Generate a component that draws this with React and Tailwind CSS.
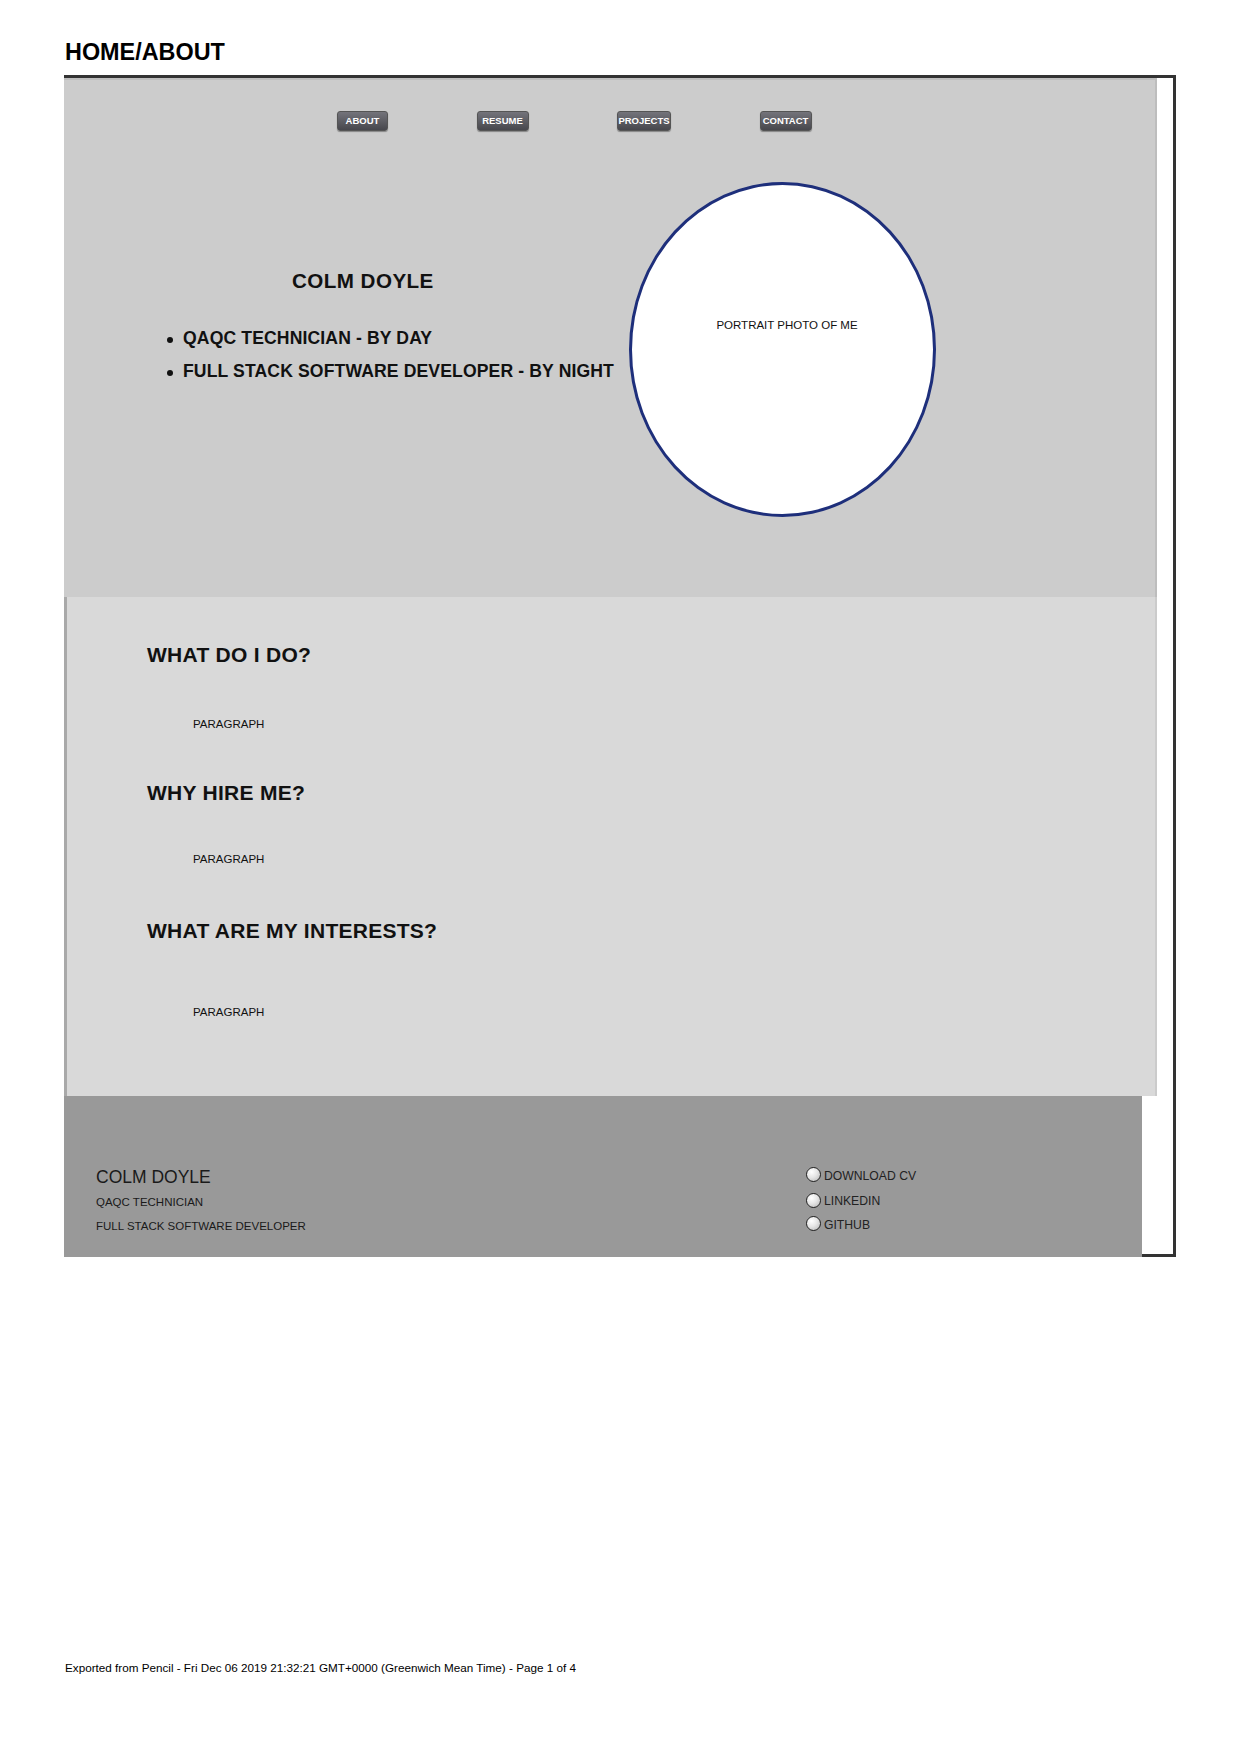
export default function App() {
  const navs = [
    { label: "ABOUT", w: "w-[51px]" },
    { label: "RESUME", w: "w-[52px]" },
    { label: "PROJECTS", w: "w-[54px]" },
    { label: "CONTACT", w: "w-[52px]" },
  ];
  const sections = [
    { title: "WHAT DO I DO?", hmt: "mt-[46px]", pmt: "mt-[49.5px]" },
    { title: "WHY HIRE ME?", hmt: "mt-[50.5px]", pmt: "mt-[46.5px]" },
    { title: "WHAT ARE MY INTERESTS?", hmt: "mt-[53.5px]", pmt: "mt-[61.5px]" },
  ];
  const links = ["DOWNLOAD CV", "LINKEDIN", "GITHUB"];
  return (
    <div className="relative w-[1241px] h-[1752px] bg-white font-['Liberation_Sans',Arial,sans-serif] text-[#111]">
      <div className="pt-[40px] pl-[65px] text-[23.4px] leading-[24px] font-bold text-black">HOME/ABOUT</div>

      <div className="ml-[64px] mt-[11px] w-[1112px] border-t-[3px] border-r-[3px] border-b-[3px] border-[#333333]">
        {/* Header panel */}
        <div className="w-[1093px] h-[519px] bg-[#cccccc] border-t-2 border-r-2 border-[#bdbdbd]">
          <div className="flex pt-[31px] pl-[273px] gap-[88.5px]">
            {navs.map((n) => (
              <div
                key={n.label}
                className={`${n.w} h-[20px] flex items-center justify-center rounded-[3px] bg-gradient-to-b from-[#74747b] to-[#47474d] border border-[#555] shadow-[0_1px_1px_rgba(0,0,0,0.35)] text-white text-[9.5px] leading-none font-bold`}
              >
                {n.label}
              </div>
            ))}
          </div>

          <div className="flex mt-[51px]">
            <div className="w-[565px]">
              <div className="pl-[228px] pt-[86.6px] text-[20.6px] leading-[24px] font-bold tracking-[0.45px]">COLM DOYLE</div>
              <ul className="mt-[29.4px] pl-[103px]">
                {["QAQC TECHNICIAN - BY DAY", "FULL STACK SOFTWARE DEVELOPER - BY NIGHT"].map((t) => (
                  <li key={t} className="flex items-center h-[33px] text-[17.6px] leading-[33px] font-bold tracking-[0.12px]">
                    <span className="w-[6px] h-[6px] rounded-full bg-[#111] mr-[10px] mt-[3px]" />
                    {t}
                  </li>
                ))}
              </ul>
            </div>
            <div className="w-[307px] h-[335px] rounded-[50%] border-[3px] border-[#1e2f7b] bg-white pt-[133px] pl-[9px] text-center text-[11.5px] leading-[14px]">
              PORTRAIT PHOTO OF ME
            </div>
          </div>
        </div>

        {/* Content panel */}
        <div className="w-[1093px] h-[499px] bg-[#d9d9d9] border-l-[3px] border-l-[#a9a9a9] border-r-2 border-r-[#cbcbcb] pl-[80px]">
          <div className="h-[0.1px]" />
          {sections.map((s) => (
            <div key={s.title}>
              <div className={`${s.hmt} text-[21px] leading-[24px] font-bold tracking-[0.27px]`}>{s.title}</div>
              <div className={`${s.pmt} pl-[46px] text-[11.5px] leading-[14px]`}>PARAGRAPH</div>
            </div>
          ))}
        </div>

        {/* Footer */}
        <div className="relative w-[1078px] h-[161px] -mb-[3px] bg-[#999999] flex text-[#1a1a1a]">
          <div className="w-[742px] pl-[32px] pt-[70.5px]">
            <div className="text-[17.5px] leading-[20px]">COLM DOYLE</div>
            <div className="mt-[3.75px] text-[11.5px] leading-[24px]">QAQC TECHNICIAN</div>
            <div className="text-[11.5px] leading-[24px]">FULL STACK SOFTWARE DEVELOPER</div>
          </div>
          <div className="pt-[71px] flex flex-col">
            {links.map((l, i) => (
              <div key={l} className={`flex items-center h-[15px] ${i === 1 ? "mt-[10.5px]" : i === 2 ? "mt-[8.5px]" : ""}`}>
                <span className="w-[15px] h-[15px] rounded-full border border-[#222] bg-[radial-gradient(circle_at_35%_30%,#ffffff,#e6e6e6_45%,#b5b5b5)]" />
                <span className="ml-[3px] mt-[2px] text-[12.2px] leading-[14px] text-[#222]">{l}</span>
              </div>
            ))}
          </div>
        </div>
      </div>

      <div className="mt-[404.3px] pl-[65px] text-[11.7px] leading-[14px] text-black">
        Exported from Pencil - Fri Dec 06 2019 21:32:21 GMT+0000 (Greenwich Mean Time) - Page 1 of 4
      </div>
    </div>
  );
}
